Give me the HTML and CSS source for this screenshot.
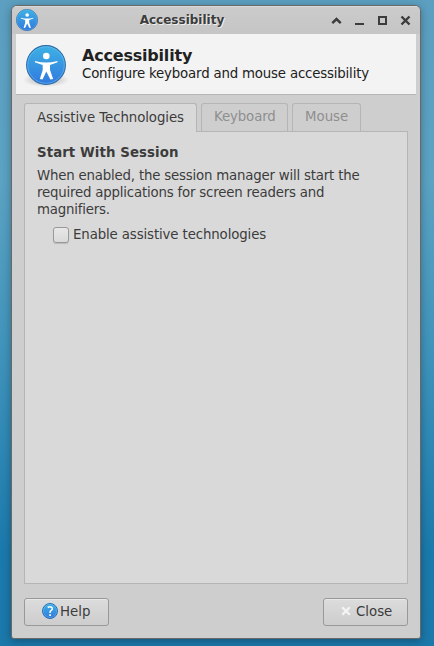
FILE: index.html
```
<!DOCTYPE html>
<html lang="en">
<head>
<meta charset="utf-8">
<title>Accessibility</title>
<link rel="stylesheet" href="styles.css">
</head>
<body>
<svg class="defs" width="0" height="0">
  <defs>
    <linearGradient id="blue" x1="0" y1="0" x2="0" y2="1">
      <stop offset="0" stop-color="#3db2e4"/>
      <stop offset="1" stop-color="#3179df"/>
    </linearGradient>
    <radialGradient id="shade">
      <stop offset="0" stop-color="#000" stop-opacity=".3"/>
      <stop offset="1" stop-color="#000" stop-opacity="0"/>
    </radialGradient>
    <symbol id="person" viewBox="0 0 40 40">
      <circle cx="20" cy="20" r="19.4" fill="url(#blue)" stroke="#2c6ca8" stroke-width="1.1"/>
      <circle cx="20" cy="20" r="18.3" fill="none" stroke="#7bc4f2" stroke-opacity=".55"/>
      <circle cx="20.3" cy="11" r="3.3" fill="#fff"/>
      <path d="M9 15.9Q20 19 31.4 15.9L31.6 17.2L24 20V25L27.2 34L24.4 34.4L20.3 26.5L16.5 34.4L13.8 34L16.7 25V20L8.8 17.2Z" fill="#fff"/>
    </symbol>
  </defs>
</svg>
<div class="window">
  <header class="titlebar">
    <svg class="app-icon" width="22" height="22"><use href="#person"/></svg>
    <span class="title">Accessibility</span>
    <svg class="controls" width="82" height="12" viewBox="0 0 82 12" fill="none" stroke="#3c3c3c">
      <path d="M1.3 8.1L5.5 4L9.7 8.1" stroke-width="2.5"/>
      <path d="M24 9h9" stroke-width="2"/>
      <path d="M48 2h7v7h-7z" stroke-width="2"/>
      <path d="M70.5 1.5L78.5 9.5M78.5 1.5L70.5 9.5" stroke-width="2.4"/>
    </svg>
  </header>
  <section class="heading">
    <svg class="logo" width="46" height="46" viewBox="0 0 46 46">
      <ellipse cx="23" cy="37" rx="23" ry="7" fill="url(#shade)"/>
      <use href="#person" x="3" y="2" width="40" height="40"/>
    </svg>
    <div>
      <h1>Accessibility</h1>
      <p>Configure keyboard and mouse accessibility</p>
    </div>
  </section>
  <main>
    <nav class="tabs">
      <div class="tab active">Assistive Technologies</div>
      <div class="tab keyboard">Keyboard</div>
      <div class="tab mouse">Mouse</div>
    </nav>
    <section class="panel">
      <h2>Start With Session</h2>
      <p>When enabled, the session manager will start the<br>required applications for screen readers and<br>magnifiers.</p>
      <div class="option"><span class="checkbox"></span>Enable assistive technologies</div>
    </section>
    <footer>
      <div class="button help">
        <svg width="16" height="16" viewBox="0 0 16 16">
          <circle cx="8" cy="8" r="7.5" fill="url(#blue)" stroke="#2870b5"/>
          <circle cx="8" cy="8" r="6.6" fill="none" stroke="#8accf5" stroke-opacity=".5" stroke-width=".7"/>
          <path d="M5.7 4.5Q8 3 9.7 4.3Q11.2 6 9.2 7.3Q8 8 8 9.9" fill="none" stroke="#fff" stroke-width="1.5"/>
          <path d="M7.2 11.2h1.7v1.8H7.2z" fill="#fff"/>
        </svg>
        <span>Help</span>
      </div>
      <div class="button close">
        <svg width="16" height="16" viewBox="0 0 16 16"><path d="M4.3 4.3L11.7 11.7M11.7 4.3L4.3 11.7" stroke="#f5f5f5" stroke-width="2.3"/></svg>
        <span>Close</span>
      </div>
    </footer>
  </main>
</div>
</body>
</html>
```
FILE: styles.css
```
* { box-sizing: border-box; }
body {
  margin: 0;
  height: 646px;
  padding: 5px 13px 7px 11px;
  overflow: hidden;
  background: linear-gradient(#5c9fc0 0, #5ba2c3 28%, #3f93bb 55%, #1b7aac 85%, #1b78aa 100%);
  font: 13.333px/17px "DejaVu Sans", sans-serif;
  color: #3c3c3c;
}
.defs { display: block; }
h1, h2, p { margin: 0; }
svg { display: block; flex: none; }
.window {
  width: 410px;
  height: 634px;
  border: 1px solid #686868;
  border-radius: 6px 6px 3px 3px;
  background: #cecece;
  box-shadow: 0 2px 8px rgba(0, 0, 0, .3);
  overflow: hidden;
}
.titlebar {
  height: 28px;
  display: flex;
  align-items: center;
  background: linear-gradient(#cbcbcb, #c5c5c5);
  border-top: 1px solid #dadada;
  padding: 0 7px 0 4px;
}
.app-icon { margin-bottom: 1px; }
.title {
  flex: 1;
  padding-right: 5px;
  text-align: center;
  font-size: 12px;
  font-weight: bold;
  text-shadow: 1px 1px 0 #eee;
}
.heading {
  height: 61px;
  margin: 0 4px;
  display: flex;
  background: #f3f3f3;
  border-bottom: 1px solid #b5b5b5;
  color: #212121;
}
.logo { margin: 9px 13px 0 7px; }
.heading h1 { margin-top: 12px; font-size: 16px; line-height: 19px; letter-spacing: -.2px; }
.heading p { letter-spacing: -.18px; }
main { padding: 8px 12px 0; }
.tabs { display: flex; gap: 4px; height: 29px; }
.tab {
  height: 28px;
  border: 1px solid #b5b5b5;
  border-bottom: 0;
  border-radius: 3px 3px 0 0;
  padding: 4px 12px 0;
  color: #8e8e8e;
  letter-spacing: -.13px;
  white-space: nowrap;
}
.active {
  position: relative;
  z-index: 1;
  width: 173px;
  height: 29px;
  padding-top: 5px;
  background: #d9d9d9;
  color: #3c3c3c;
  letter-spacing: -.07px;
}
.keyboard { width: 87px; }
.mouse { width: 69px; letter-spacing: 0; }
.panel {
  height: 453px;
  margin-top: -1px;
  padding: 12px;
  border: 1px solid #b5b5b5;
  background: #d9d9d9;
}
.panel h2 { font-size: 13.333px; line-height: 17px; letter-spacing: .08px; }
.panel p { margin-top: 6px; letter-spacing: -.195px; white-space: nowrap; }
.option { display: flex; align-items: center; margin: 8px 0 0 16px; letter-spacing: -.12px; }
.checkbox {
  width: 16px;
  height: 16px;
  margin-right: 4px;
  border: 1px solid #999;
  border-radius: 3px;
  background: linear-gradient(#e8e8e8, #d9d9d9);
  box-shadow: 0 1px 1px rgba(0, 0, 0, .15);
}
footer { display: flex; justify-content: space-between; margin-top: 14px; }
.button {
  width: 85px;
  height: 28px;
  display: flex;
  align-items: center;
  padding-bottom: 2px;
  border: 1px solid #999;
  border-radius: 3px;
  background: linear-gradient(#dcdcdc, #cdcdcd);
  box-shadow: inset 0 1px #e8e8e8;
}
.help { padding-left: 17px; gap: 2px; }
.close { padding-left: 14px; gap: 2px; }
```
